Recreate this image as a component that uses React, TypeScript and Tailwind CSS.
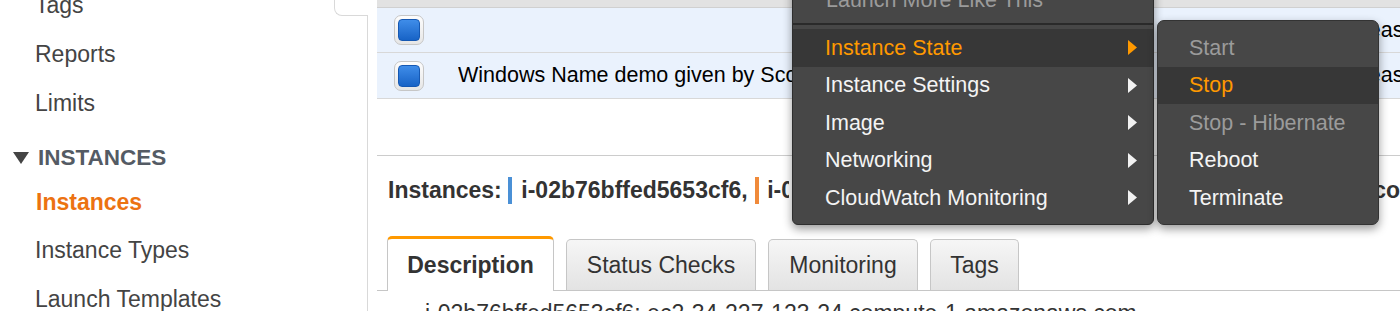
import React from "react";

type MenuItem = {
  label: string;
  tone?: "normal" | "active" | "disabled";
  submenu?: boolean;
};

const mainMenu: MenuItem[] = [
  { label: "Instance State", tone: "active", submenu: true },
  { label: "Instance Settings", submenu: true },
  { label: "Image", submenu: true },
  { label: "Networking", submenu: true },
  { label: "CloudWatch Monitoring", submenu: true },
];

const stateMenu: MenuItem[] = [
  { label: "Start", tone: "disabled" },
  { label: "Stop", tone: "active" },
  { label: "Stop - Hibernate", tone: "disabled" },
  { label: "Reboot" },
  { label: "Terminate" },
];

function Checkbox() {
  return (
    <div className="flex h-[30px] w-[30px] shrink-0 items-center justify-center rounded-[7px] border border-[#c6c6c6] bg-linear-to-b from-[#fdfdfd] to-[#e6e6e6]">
      <div className="h-[22px] w-[22px] rounded-[4px] border border-[#1558b3] bg-linear-to-b from-[#3f8de9] to-[#1763c6]" />
    </div>
  );
}

function Arrow({ active }: { active?: boolean }) {
  return (
    <svg width="9" height="15" viewBox="0 0 9 15" className="shrink-0">
      <path d="M0 0 L9 7.5 L0 15 Z" fill={active ? "#ff9900" : "#f2f2f2"} />
    </svg>
  );
}

function MenuRow({ item, pl }: { item: MenuItem; pl: string }) {
  const color =
    item.tone === "active"
      ? "text-[#ff9900]"
      : item.tone === "disabled"
      ? "text-[#9b9b9b]"
      : "text-[#f4f4f4]";
  return (
    <div
      className={`flex h-[37.5px] items-center justify-between pr-[16px] text-[21.5px] ${pl} ${color} ${
        item.tone === "active" ? "bg-[#373737]" : ""
      }`}
    >
      <span>{item.label}</span>
      {item.submenu && <Arrow active={item.tone === "active"} />}
    </div>
  );
}

function Sidebar() {
  return (
    <aside className="relative w-[368px] shrink-0 border-r border-[#d9d9d9] text-[23px] text-[#444]">
      <div className="absolute right-[-1px] top-[-10px] h-[26px] w-[34px] rounded-bl-[8px] border-b border-l border-[#d9d9d9] bg-white" />
      <div className="-mt-[19px] pl-[35px]">
        <div className="h-[49px] leading-[49px]">Tags</div>
        <div className="h-[49px] leading-[49px]">Reports</div>
        <div className="h-[49px] leading-[49px]">Limits</div>
        <div className="-ml-[22px] mt-[8px] flex h-[44px] items-center gap-[9px] text-[22.5px] font-bold text-[#545b64]">
          <svg width="16" height="12" viewBox="0 0 16 12">
            <path d="M0 0 H16 L8 12 Z" fill="#444" />
          </svg>
          <span>INSTANCES</span>
        </div>
        <div className="h-[44px] pl-[1px] leading-[44px] font-bold text-[#ec7211]">Instances</div>
        <div className="mt-[2px] h-[49px] leading-[49px]">Instance Types</div>
        <div className="h-[49px] leading-[49px]">Launch Templates</div>
      </div>
    </aside>
  );
}

function Main() {
  const tabs = [
    { label: "Description", w: "w-[167px]" },
    { label: "Status Checks", w: "w-[190px]" },
    { label: "Monitoring", w: "w-[150px]" },
    { label: "Tags", w: "w-[89px]" },
  ];
  return (
    <main className="min-w-0 flex-1 pl-[9px]">
      <div className="h-[8px] border-b border-[#d0d0d0] bg-[#e2e2e2]" />
      <div className="flex h-[45px] items-center border-b border-[#d8d8d8] bg-[#eaf2fd] text-[21.5px] text-black">
        <div className="ml-[17px]">
          <Checkbox />
        </div>
        <div className="ml-[34px] w-[881px] shrink-0" />
        <div className="whitespace-nowrap">us-east-1a</div>
      </div>
      <div className="flex h-[46px] items-center border-b border-[#d8d8d8] bg-[#eaf2fd] text-[21.5px] text-black">
        <div className="ml-[17px]">
          <Checkbox />
        </div>
        <div className="ml-[34px] w-[881px] shrink-0">
          <div className="w-[334px] overflow-hidden whitespace-nowrap">Windows Name demo given by Scott</div>
        </div>
        <div className="whitespace-nowrap">us-east-1a</div>
      </div>

      <div className="h-[56px]" />
      <div className="border-t border-[#cccccc] pl-[11px] pt-[20px]">
        <div className="flex h-[28px] items-center whitespace-nowrap text-[23px] font-bold text-[#333]">
          <span>Instances:</span>
          <span className="ml-[6px] h-[27px] w-[7px] bg-[#4a90d6]" />
          <span className="ml-[9px]">i-02b76bffed5653cf6,</span>
          <span className="ml-[7px] h-[27px] w-[7px] bg-[#f08a3a]" />
          <span className="ml-[8px] w-[22px] shrink-0 overflow-hidden">i-0c91d5e2</span>
          <span className="w-[584px] shrink-0" />
          <span>co</span>
        </div>
      </div>

      <div className="mt-[32px] flex h-[55px] items-end gap-[12px] border-b border-[#c6c6c6] pl-[10px] text-[23px] text-[#333]">
        {tabs.map((t, i) =>
          i === 0 ? (
            <div
              key={t.label}
              className={`-mb-px flex h-[55px] items-center justify-center rounded-t-[5px] border-x border-t-[3px] border-x-[#c6c6c6] border-t-[#ff9900] bg-white font-bold ${t.w}`}
            >
              {t.label}
            </div>
          ) : (
            <div
              key={t.label}
              className={`flex h-[51px] items-center justify-center rounded-t-[5px] border border-b-0 border-[#c6c6c6] bg-linear-to-b from-[#f6f6f6] to-[#e3e3e3] ${t.w}`}
            >
              {t.label}
            </div>
          )
        )}
      </div>
      <div className="mt-[9px] whitespace-nowrap pl-[48px] text-[23px] leading-[26px] text-[#333]">
        i-02b76bffed5653cf6: ec2-34-227-123-24.compute-1.amazonaws.com
      </div>
    </main>
  );
}

function ContextMenus() {
  return (
    <>
      <div className="absolute left-[792px] top-[-19px] w-[362px] rounded-b-[6px] border border-[#2e2e2e] bg-[#474747] pb-[7.5px] shadow-[0_4px_10px_rgba(0,0,0,0.4)]">
        <div className="flex h-[37px] items-center pl-[33px] text-[21.5px] text-[#9b9b9b]">Launch More Like This</div>
        <div className="my-[4px] h-[2px] bg-[#2a2a2a]" />
        {mainMenu.map((m) => (
          <MenuRow key={m.label} item={m} pl="pl-[32px]" />
        ))}
      </div>
      <div className="absolute left-[1157px] top-[20px] w-[222px] rounded-[7px] border border-[#333] bg-[#474747] pb-[7px] pt-[8px] shadow-[0_4px_10px_rgba(0,0,0,0.4)]">
        {stateMenu.map((m) => (
          <MenuRow key={m.label} item={m} pl="pl-[31px]" />
        ))}
      </div>
    </>
  );
}

export default function App() {
  return (
    <div className="relative flex h-[311px] w-[1400px] overflow-hidden bg-white font-['Liberation_Sans',Arial,sans-serif]">
      <Sidebar />
      <Main />
      <ContextMenus />
    </div>
  );
}
